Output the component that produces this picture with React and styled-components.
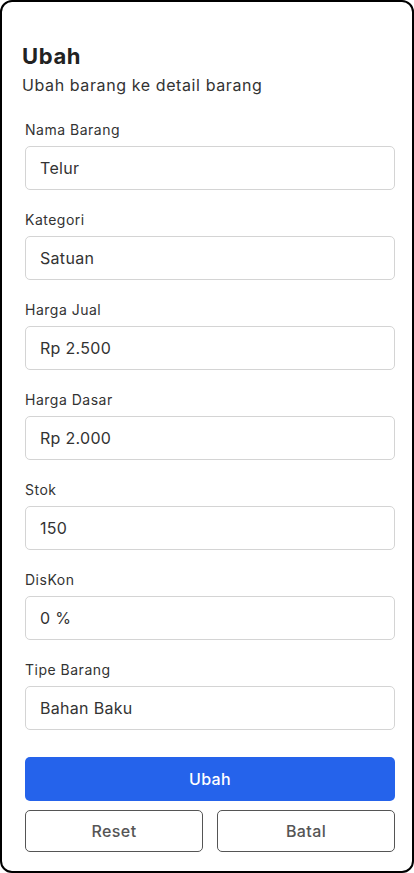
import React from "react";
import styled, { createGlobalStyle } from "styled-components";

const GlobalStyle = createGlobalStyle`
  body {
    margin: 0;
    font-family: "Inter", "Noto Sans", sans-serif;
    background: #fff;
  }
`;

const fields = [
  { label: "Nama Barang", value: "Telur" },
  { label: "Kategori", value: "Satuan" },
  { label: "Harga Jual", value: "Rp 2.500" },
  { label: "Harga Dasar", value: "Rp 2.000" },
  { label: "Stok", value: "150" },
  { label: "DisKon", value: "0 %" },
  { label: "Tipe Barang", value: "Bahan Baku" },
];

function App() {
  return (
    <>
      <GlobalStyle />
      <Card>
        <Title>Ubah</Title>
        <Subtitle>Ubah barang ke detail barang</Subtitle>
        <Form>
          {fields.map((f) => (
            <Field key={f.label}>
              <Label>{f.label}</Label>
              <Input>{f.value}</Input>
            </Field>
          ))}
          <PrimaryButton>Ubah</PrimaryButton>
          <ButtonRow>
            <OutlineButton>Reset</OutlineButton>
            <OutlineButton>Batal</OutlineButton>
          </ButtonRow>
        </Form>
      </Card>
    </>
  );
}

const Card = styled.div`
  width: 414px;
  height: 873px;
  box-sizing: border-box;
  border: 2px solid #000;
  border-radius: 12px;
  padding: 38px 17px 0 20px;
  display: flex;
  flex-direction: column;
`;

const Title = styled.h1`
  margin: 0;
  font-size: 22px;
  line-height: 32px;
  font-weight: 700;
  letter-spacing: 0.6px;
  color: #222;
`;

const Subtitle = styled.p`
  margin: 1px 0 0;
  font-size: 16px;
  line-height: 24px;
  letter-spacing: 0.6px;
  color: #333;
`;

const Form = styled.div`
  display: flex;
  flex-direction: column;
  padding: 0 0 0 3px;
  margin-top: 23px;
`;

const Field = styled.div`
  display: flex;
  flex-direction: column;
  gap: 6px;
  margin-bottom: 20px;
`;

const Label = styled.label`
  font-size: 14px;
  line-height: 20px;
  letter-spacing: 0.5px;
  color: #333;
`;

const Input = styled.div`
  height: 44px;
  box-sizing: border-box;
  border: 1px solid #d4d4d4;
  border-radius: 5px;
  padding: 0 14px;
  display: flex;
  align-items: center;
  font-size: 16px;
  letter-spacing: 0.3px;
  color: #333;
`;

const PrimaryButton = styled.button`
  margin-top: 7px;
  height: 44px;
  border: none;
  border-radius: 5px;
  background: #2563eb;
  color: #fff;
  font-family: inherit;
  font-size: 16px;
  font-weight: 500;
  letter-spacing: 0.4px;
`;

const ButtonRow = styled.div`
  display: grid;
  grid-template-columns: 1fr 1fr;
  gap: 14px;
  margin-top: 9px;
`;

const OutlineButton = styled.button`
  height: 42px;
  border: 1px solid #555;
  border-radius: 5px;
  background: #fff;
  color: #555;
  font-family: inherit;
  font-size: 16px;
  font-weight: 500;
  letter-spacing: 0.4px;
`;

export default App;
